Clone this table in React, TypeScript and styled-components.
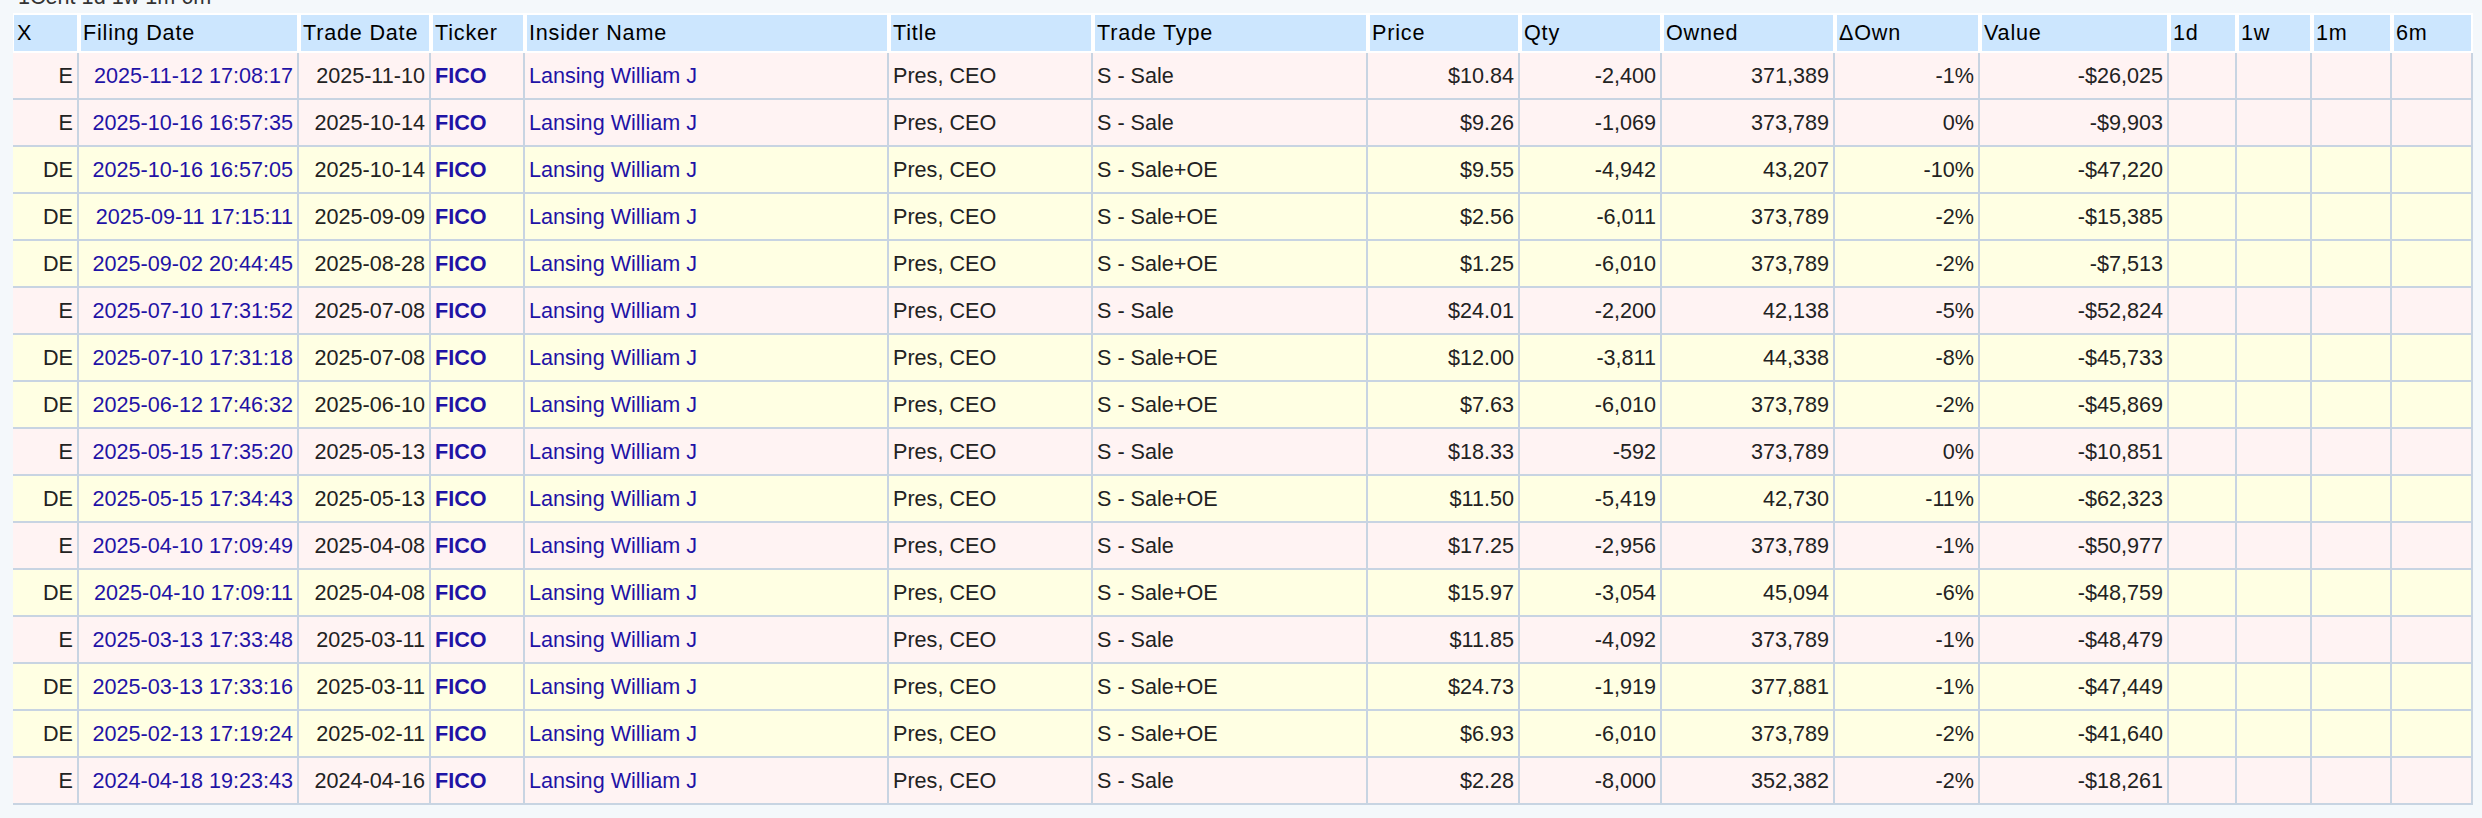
import React from "react";
import styled, { createGlobalStyle } from "styled-components";

const GlobalStyle = createGlobalStyle`
  html, body {
    margin: 0;
    padding: 0;
    background: #f4f8fb;
  }
  body {
    font-family: "Liberation Sans", Arial, Helvetica, sans-serif;
    font-size: 21.6px;
    color: #222;
  }
`;

const Page = styled.div`
  padding: 0 9px 0 13px;
`;

// the line above the table is cut off by the top of the window
const Caption = styled.div`
  height: 13px;
  overflow: hidden;
  padding-left: 5px;

  span {
    display: block;
    margin-top: -14px;
    line-height: 22px;
    color: #333;
    white-space: nowrap;
  }
`;

const Table = styled.table`
  width: 2460px;
  table-layout: fixed;
  border-collapse: separate;
  border-spacing: 0;
  background: #fff;
`;

const HeadCell = styled.th<{ $width: number }>`
  box-sizing: border-box;
  width: ${(p) => p.$width}px;
  height: 40px;
  padding: 0 2px 0 4px;
  background: #cce6fe;
  border-top: 2px solid #fff;
  border-bottom: 2px solid #fff;
  border-right: 2px solid #fff;
  box-shadow: inset 2px 0 0 #fff;
  color: #000;
  font-weight: normal;
  text-align: left;
  letter-spacing: 0.8px;
  white-space: nowrap;
  overflow: hidden;
  vertical-align: middle;

  &:first-child {
    box-shadow: inset 1px 0 0 #fff;
  }
`;

const Row = styled.tr<{ $kind: "E" | "DE" }>`
  background: ${(p) => (p.$kind === "DE" ? "#ffffe3" : "#fff3f3")};
`;

const Cell = styled.td<{ $align: "left" | "right" }>`
  box-sizing: border-box;
  height: 47px;
  padding: 0 4px;
  border-right: 2px solid #c8d4e2;
  border-bottom: 2px solid #c8d4e2;
  text-align: ${(p) => p.$align};
  white-space: nowrap;
  overflow: hidden;
  vertical-align: middle;
`;

const Link = styled.a<{ $bold?: boolean }>`
  color: #1f13a6;
  text-decoration: none;
  font-weight: ${(p) => (p.$bold ? "bold" : "normal")};
`;

type Trade = {
  x: "E" | "DE";
  filed: string;
  traded: string;
  type: string;
  price: string;
  qty: string;
  owned: string;
  dOwn: string;
  value: string;
};

const columns: { label: string; width: number }[] = [
  { label: "X", width: 66 },
  { label: "Filing Date", width: 220 },
  { label: "Trade Date", width: 132 },
  { label: "Ticker", width: 94 },
  { label: "Insider Name", width: 364 },
  { label: "Title", width: 204 },
  { label: "Trade Type", width: 275 },
  { label: "Price", width: 152 },
  { label: "Qty", width: 142 },
  { label: "Owned", width: 173 },
  { label: "ΔOwn", width: 145 },
  { label: "Value", width: 189 },
  { label: "1d", width: 68 },
  { label: "1w", width: 75 },
  { label: "1m", width: 80 },
  { label: "6m", width: 81 },
];

const trades: Trade[] = [
  { x: "E", filed: "2025-11-12 17:08:17", traded: "2025-11-10", type: "S - Sale", price: "$10.84", qty: "-2,400", owned: "371,389", dOwn: "-1%", value: "-$26,025" },
  { x: "E", filed: "2025-10-16 16:57:35", traded: "2025-10-14", type: "S - Sale", price: "$9.26", qty: "-1,069", owned: "373,789", dOwn: "0%", value: "-$9,903" },
  { x: "DE", filed: "2025-10-16 16:57:05", traded: "2025-10-14", type: "S - Sale+OE", price: "$9.55", qty: "-4,942", owned: "43,207", dOwn: "-10%", value: "-$47,220" },
  { x: "DE", filed: "2025-09-11 17:15:11", traded: "2025-09-09", type: "S - Sale+OE", price: "$2.56", qty: "-6,011", owned: "373,789", dOwn: "-2%", value: "-$15,385" },
  { x: "DE", filed: "2025-09-02 20:44:45", traded: "2025-08-28", type: "S - Sale+OE", price: "$1.25", qty: "-6,010", owned: "373,789", dOwn: "-2%", value: "-$7,513" },
  { x: "E", filed: "2025-07-10 17:31:52", traded: "2025-07-08", type: "S - Sale", price: "$24.01", qty: "-2,200", owned: "42,138", dOwn: "-5%", value: "-$52,824" },
  { x: "DE", filed: "2025-07-10 17:31:18", traded: "2025-07-08", type: "S - Sale+OE", price: "$12.00", qty: "-3,811", owned: "44,338", dOwn: "-8%", value: "-$45,733" },
  { x: "DE", filed: "2025-06-12 17:46:32", traded: "2025-06-10", type: "S - Sale+OE", price: "$7.63", qty: "-6,010", owned: "373,789", dOwn: "-2%", value: "-$45,869" },
  { x: "E", filed: "2025-05-15 17:35:20", traded: "2025-05-13", type: "S - Sale", price: "$18.33", qty: "-592", owned: "373,789", dOwn: "0%", value: "-$10,851" },
  { x: "DE", filed: "2025-05-15 17:34:43", traded: "2025-05-13", type: "S - Sale+OE", price: "$11.50", qty: "-5,419", owned: "42,730", dOwn: "-11%", value: "-$62,323" },
  { x: "E", filed: "2025-04-10 17:09:49", traded: "2025-04-08", type: "S - Sale", price: "$17.25", qty: "-2,956", owned: "373,789", dOwn: "-1%", value: "-$50,977" },
  { x: "DE", filed: "2025-04-10 17:09:11", traded: "2025-04-08", type: "S - Sale+OE", price: "$15.97", qty: "-3,054", owned: "45,094", dOwn: "-6%", value: "-$48,759" },
  { x: "E", filed: "2025-03-13 17:33:48", traded: "2025-03-11", type: "S - Sale", price: "$11.85", qty: "-4,092", owned: "373,789", dOwn: "-1%", value: "-$48,479" },
  { x: "DE", filed: "2025-03-13 17:33:16", traded: "2025-03-11", type: "S - Sale+OE", price: "$24.73", qty: "-1,919", owned: "377,881", dOwn: "-1%", value: "-$47,449" },
  { x: "DE", filed: "2025-02-13 17:19:24", traded: "2025-02-11", type: "S - Sale+OE", price: "$6.93", qty: "-6,010", owned: "373,789", dOwn: "-2%", value: "-$41,640" },
  { x: "E", filed: "2024-04-18 19:23:43", traded: "2024-04-16", type: "S - Sale", price: "$2.28", qty: "-8,000", owned: "352,382", dOwn: "-2%", value: "-$18,261" },
];

const App = () => {
  return (
    <Page>
      <GlobalStyle />
      <Caption>
        <span>1Cent 1d 1w 1m 6m</span>
      </Caption>

      <Table>
        <thead>
          <tr>
            {columns.map((c) => (
              <HeadCell key={c.label} $width={c.width}>
                {c.label}
              </HeadCell>
            ))}
          </tr>
        </thead>
        <tbody>
          {trades.map((t, i) => (
            <Row key={i} $kind={t.x}>
              <Cell $align="right">{t.x}</Cell>
              <Cell $align="right">
                <Link href="#">{t.filed}</Link>
              </Cell>
              <Cell $align="right">{t.traded}</Cell>
              <Cell $align="left">
                <Link href="#" $bold>
                  FICO
                </Link>
              </Cell>
              <Cell $align="left">
                <Link href="#">Lansing William J</Link>
              </Cell>
              <Cell $align="left">Pres, CEO</Cell>
              <Cell $align="left">{t.type}</Cell>
              <Cell $align="right">{t.price}</Cell>
              <Cell $align="right">{t.qty}</Cell>
              <Cell $align="right">{t.owned}</Cell>
              <Cell $align="right">{t.dOwn}</Cell>
              <Cell $align="right">{t.value}</Cell>
              <Cell $align="right" />
              <Cell $align="right" />
              <Cell $align="right" />
              <Cell $align="right" />
            </Row>
          ))}
        </tbody>
      </Table>
    </Page>
  );
};

export default App;
